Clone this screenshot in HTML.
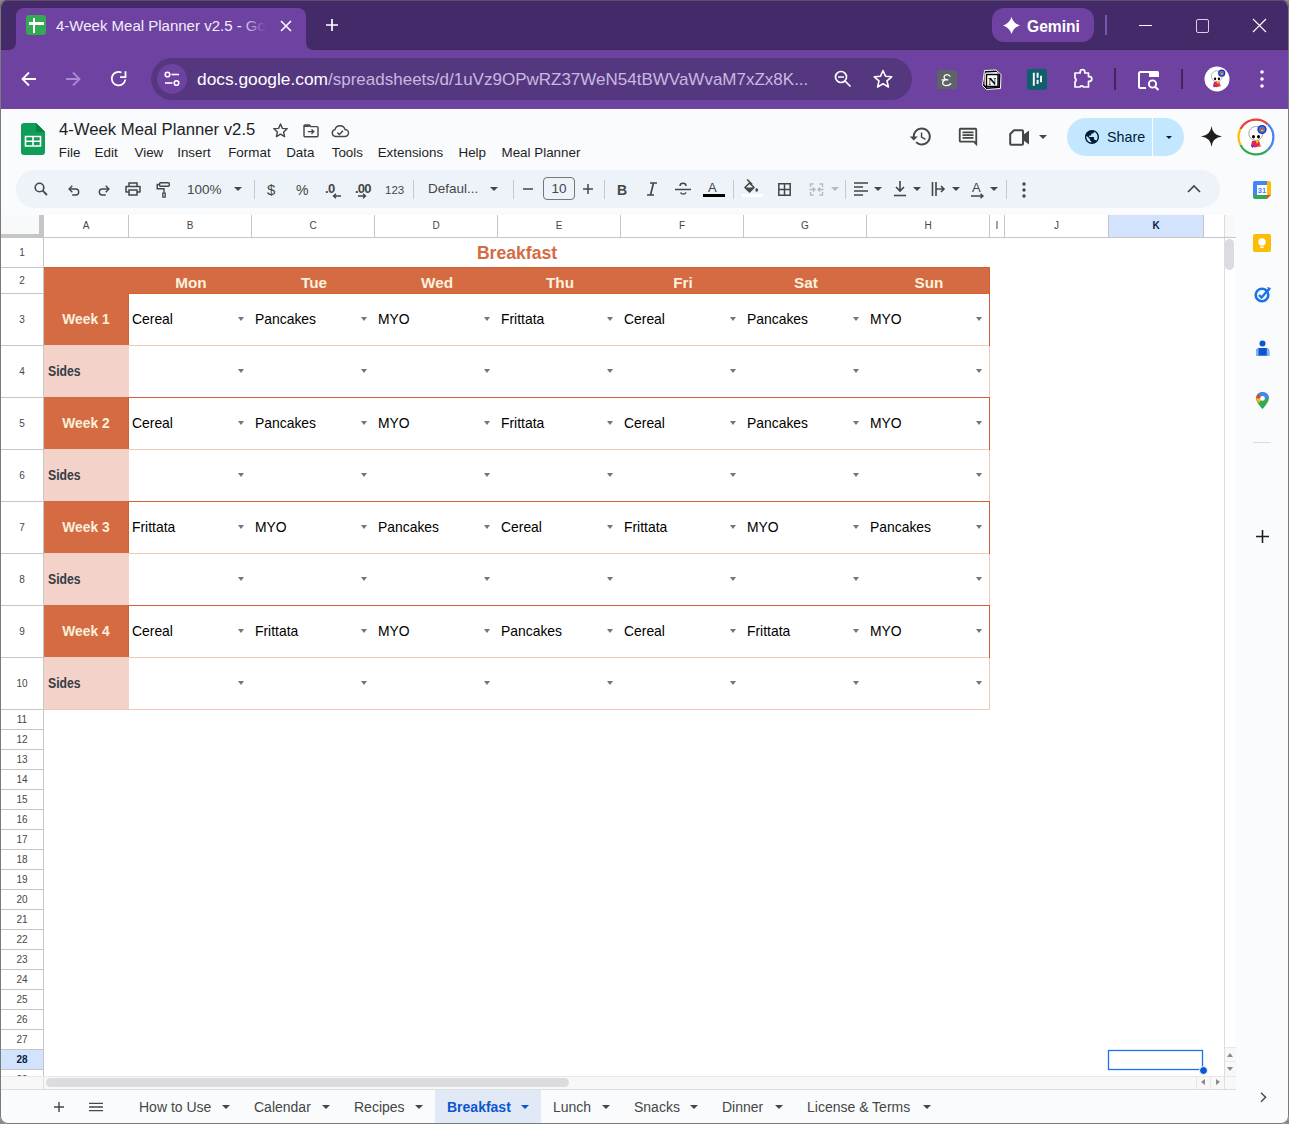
<!DOCTYPE html><html><head><meta charset="utf-8"><style>
*{margin:0;padding:0;box-sizing:border-box}
html,body{width:1289px;height:1124px;overflow:hidden;background:#f9fbfd;font-family:"Liberation Sans",sans-serif;position:relative}
.a{position:absolute}
svg{position:absolute;overflow:visible}
.rh{position:absolute;left:1px;width:42px;text-align:center;font-size:10px;color:#444746}
.ch{position:absolute;top:215px;height:22px;text-align:center;font-size:10px;color:#444746;line-height:22px}
.cell{position:absolute;font-size:13px;color:#000;white-space:nowrap;line-height:15px}
.dd{position:absolute;width:0;height:0;border-left:3.5px solid transparent;border-right:3.5px solid transparent;border-top:4px solid #757575}
.mi{position:absolute;top:144px;font-size:13.4px;color:#1f1f1f;line-height:17px;white-space:nowrap}
.st{position:absolute;top:1099px;font-size:14px;color:#444746;line-height:17px;white-space:nowrap}
.sep{position:absolute;top:180px;width:1px;height:19px;background:#c7c7c7}
</style></head><body>
<div class="a" style="left:0;top:0;width:1289px;height:50px;background:#452a6a"></div>
<div class="a" style="left:0;top:49px;width:1289px;height:1px;background:#40265e"></div>
<div class="a" style="left:0;top:50px;width:1289px;height:59px;background:#6e42a1"></div>
<div class="a" style="left:16px;top:8px;width:290px;height:46px;background:#6e42a1;border-radius:8px 8px 0 0"></div>
<svg style="left:0;top:0" width="1289" height="60"><path d="M8 50 Q16 50 16 42 L16 50 Z" fill="#6e42a1"/><path d="M306 42 Q306 50 314 50 L306 50 Z" fill="#6e42a1"/></svg>
<div class="a" style="left:26px;top:15px;width:20px;height:20px;background:#34a853;border-radius:3px"></div>
<div class="a" style="left:32.5px;top:17.5px;width:2.6px;height:15px;background:#fff"></div>
<div class="a" style="left:28.5px;top:22px;width:15px;height:2.6px;background:#fff"></div>
<div class="a w" style="left:56px;top:17px;font-size:15px;color:#f3eefa;white-space:nowrap;line-height:18px;width:212px;overflow:hidden">4-Week Meal Planner v2.5 - Google Sheets</div>
<div class="a" style="left:240px;top:10px;width:30px;height:30px;background:linear-gradient(90deg,rgba(110,66,161,0),#6e42a1 85%)"></div>
<svg style="left:280px;top:20px" width="12" height="12"><path d="M1 1L11 11M11 1L1 11" stroke="#fff" stroke-width="1.6"/></svg>
<svg style="left:326px;top:19px" width="12" height="12"><path d="M6 0V12M0 6H12" stroke="#fff" stroke-width="1.7"/></svg>
<div class="a" style="left:992px;top:8px;width:102px;height:34px;background:#6e42a1;border-radius:12px"></div>
<svg style="left:1003px;top:17px" width="17" height="17"><path d="M8.5 0 Q10.5 6.5 17 8.5 Q10.5 10.5 8.5 17 Q6.5 10.5 0 8.5 Q6.5 6.5 8.5 0Z" fill="#fff"/></svg>
<div class="a" style="left:1027px;top:16.5px;font-size:15.6px;font-weight:bold;color:#fff;line-height:19px">Gemini</div>
<div class="a" style="left:1105px;top:15px;width:2px;height:20px;background:#7b55ad"></div>
<svg style="left:1139px;top:25px" width="13" height="2"><path d="M0 0.5H13" stroke="#fff" stroke-width="1"/></svg>
<div class="a" style="left:1195.5px;top:19px;width:13.5px;height:13.5px;border:1.2px solid #d9d0e6;border-radius:2px"></div>
<svg style="left:1253px;top:19px" width="13" height="13"><path d="M0 0L13 13M13 0L0 13" stroke="#fff" stroke-width="1.1"/></svg>
<svg style="left:21px;top:70.5px" width="16" height="16"><path d="M15 8H2M8 1.5L1.5 8L8 14.5" stroke="#fff" stroke-width="1.8" fill="none"/></svg>
<svg style="left:65px;top:70.5px" width="16" height="16"><path d="M1 8H14M8 1.5L14.5 8L8 14.5" stroke="#a98bd0" stroke-width="1.8" fill="none"/></svg>
<svg style="left:109.5px;top:70px" width="17" height="17"><path d="M15.3 9.5A6.8 6.8 0 1 1 11.5 2.5" stroke="#fff" stroke-width="1.8" fill="none"/><path d="M10 7.1H15.5V1.2" stroke="#fff" stroke-width="1.8" fill="none"/></svg>
<div class="a" style="left:151px;top:58px;width:761px;height:42px;background:#55377f;border-radius:21px"></div>
<div class="a" style="left:157px;top:64px;width:30px;height:30px;background:#6e42a1;border-radius:15px"></div>
<svg style="left:164px;top:71px" width="16" height="16"><circle cx="3.5" cy="3.5" r="2.3" stroke="#fff" stroke-width="1.6" fill="none"/><path d="M7.5 3.5H15" stroke="#fff" stroke-width="1.6"/><circle cx="12.5" cy="12" r="2.3" stroke="#fff" stroke-width="1.6" fill="none"/><path d="M1 12H8.5" stroke="#fff" stroke-width="1.6"/></svg>
<div class="a" style="left:197px;top:69px;font-size:17.33px;color:#fff;line-height:20px;white-space:nowrap">docs.google.com<span style="color:#c9b8e0;font-size:17px">/spreadsheets/d/1uVz9OPwRZ37WeN54tBWVaWvaM7xZx8K...</span></div>
<svg style="left:834px;top:70px" width="18" height="18"><circle cx="7" cy="7" r="5.5" stroke="#fff" stroke-width="1.7" fill="none"/><path d="M11 11L16.5 16.5M4 7H10" stroke="#fff" stroke-width="1.7"/></svg>
<svg style="left:873px;top:69px" width="20" height="20"><path d="M10 1.5L12.5 7.3L18.7 7.8L14 11.9L15.4 18L10 14.8L4.6 18L6 11.9L1.3 7.8L7.5 7.3Z" stroke="#fff" stroke-width="1.6" fill="none" stroke-linejoin="round"/></svg>
<div class="a" style="left:937px;top:69.5px;width:19.5px;height:19.5px;background:#5f6368;border-radius:2px"></div>
<svg style="left:937px;top:69.5px" width="20" height="20"><path d="M13 6.2Q11.5 4.3 9.2 4.8Q6.6 5.4 7.2 7.8Q7.6 9.4 10 9.6Q6 9.8 5.7 12.6Q5.5 15.3 9 15.6Q12 15.8 13.8 13.8M5 9.8H11" stroke="#fff" stroke-width="1.3" fill="none" stroke-linecap="round"/></svg>
<svg style="left:981px;top:68.5px" width="22" height="22"><path d="M3.5 1.5L15 1L20 5.5L19.5 19.5L5.5 20.5L1.5 16.5Z" fill="#000" stroke="#fff" stroke-width="1"/><path d="M5 3.5L16 3L17.5 4.5L17.5 17.8L6 18.5L3.5 15.5L3.5 5Z" fill="#fff"/><path d="M5.5 5.5H17V17.5H5.5Z" fill="#fff" stroke="#000" stroke-width="1.4"/><text x="11.3" y="15.6" font-size="11" font-weight="bold" font-family="Liberation Serif" text-anchor="middle" fill="#000">N</text></svg>
<div class="a" style="left:1026.5px;top:69px;width:20px;height:20.5px;background:#0f5f6d;border-radius:2.5px"></div>
<svg style="left:1026.5px;top:69px" width="20" height="21"><path d="M6.8 3.8V16.8M10.6 3.8V8.8M10.6 10.8V15M14 6.8V13.2" stroke="#fff" stroke-width="1.9"/></svg>
<svg style="left:1072px;top:68px" width="22" height="22"><path d="M3 5H8.2V4A2.3 2.3 0 0 1 12.8 4V5H16.5V8.7H17.5A2.3 2.3 0 0 1 17.5 13.3H16.5V19H11.5A2 2 0 0 0 8 19H3V13.8A2 2 0 0 0 3 10.2Z" stroke="#fff" stroke-width="1.7" fill="none" stroke-linejoin="round"/></svg>
<div class="a" style="left:1114px;top:68px;width:2px;height:22px;background:#3f265f"></div>
<svg style="left:1137px;top:70px" width="24" height="22"><path d="M9 18H3.5A1.5 1.5 0 0 1 2 16.5V3.5A1.5 1.5 0 0 1 3.5 2H12" stroke="#fff" stroke-width="2" fill="none"/><path d="M12 1H20.5A1.5 1.5 0 0 1 22 2.5V7H12Z" fill="#fff"/><circle cx="15.5" cy="14" r="3.6" stroke="#fff" stroke-width="1.9" fill="none"/><path d="M18 16.7L21.5 20" stroke="#fff" stroke-width="2"/></svg>
<div class="a" style="left:1181px;top:69px;width:2px;height:20px;background:#3f265f"></div>
<svg style="left:1194.5px;top:56.5px" width="44" height="44"><circle cx="22" cy="22" r="12.5" fill="#fff"/><g transform="translate(22 22) scale(0.78) translate(-22 -22)"><circle cx="21.8" cy="18.5" r="7" fill="#fff" stroke="#9a9a9a" stroke-width="0.9"/><ellipse cx="19.5" cy="21.8" rx="1.5" ry="1.7" fill="#000"/><ellipse cx="24.5" cy="21.8" rx="1.5" ry="1.7" fill="#000"/><path d="M18 26L25 25.5L26.5 31L21 32.5L17 31Z" fill="#e0245e"/><path d="M21 24.5L25 26L23 29Z" fill="#f7c600"/><path d="M17 29.5L20 31.5L18 33Z" fill="#1b3fd1"/><path d="M25 29L27.5 31L25 32Z" fill="#f26b1d"/><circle cx="28" cy="14.5" r="4.6" fill="#3a1fbf"/><circle cx="28" cy="14.5" r="3.2" fill="#1f8fd8"/><circle cx="28" cy="14.8" r="1.7" fill="#e8402a"/><rect x="27" y="14.8" width="2.4" height="1.2" fill="#f2d21b"/></g></svg>
<svg style="left:1259px;top:70px" width="6" height="18"><circle cx="3" cy="2" r="1.8" fill="#fff"/><circle cx="3" cy="9" r="1.8" fill="#fff"/><circle cx="3" cy="16" r="1.8" fill="#fff"/></svg>
<svg style="left:21px;top:123px" width="24" height="32"><path d="M3 0H15L24 9V29A3 3 0 0 1 21 32H3A3 3 0 0 1 0 29V3A3 3 0 0 1 3 0Z" fill="#0f9d58"/><path d="M15 0L24 9H18A3 3 0 0 1 15 6Z" fill="#087f3b"/><path d="M15 0V6A3 3 0 0 0 18 9H24Z" fill="#0b8043"/><path d="M4.5 13.5H19.5V23H4.5Z" fill="none" stroke="#fff" stroke-width="1.6"/><path d="M4.5 18.2H19.5M12 13.5V23" stroke="#fff" stroke-width="1.6"/></svg>
<div class="a" style="left:58.5px;top:121.2px;font-size:15.6px;color:#1f1f1f;line-height:18px;white-space:nowrap;transform:scaleX(1.07);transform-origin:0 0">4-Week Meal Planner v2.5</div>
<svg style="left:273px;top:123.3px" width="15" height="15"><path d="M7.5 1L9.4 5.4L14.2 5.8L10.6 9L11.6 13.7L7.5 11.2L3.4 13.7L4.4 9L0.8 5.8L5.6 5.4Z" stroke="#444746" stroke-width="1.4" fill="none" stroke-linejoin="round"/></svg>
<svg style="left:302.5px;top:123.7px" width="16" height="14"><path d="M2 1H6.3L7.8 2.6H14A1 1 0 0 1 15 3.6V11.8A1 1 0 0 1 14 12.8H2A1 1 0 0 1 1 11.8V2A1 1 0 0 1 2 1Z" stroke="#444746" stroke-width="1.4" fill="none"/><path d="M1 2.2H6.6" stroke="#444746" stroke-width="1.6"/><path d="M4.8 7.6H10.5M8.5 5.5L10.7 7.6L8.5 9.7" stroke="#444746" stroke-width="1.4" fill="none"/></svg>
<svg style="left:331px;top:124px" width="18" height="14"><path d="M4.5 12.5A3.5 3.5 0 0 1 4 5.6A5.2 5.2 0 0 1 14 5.5A3.5 3.5 0 0 1 14 12.5Z" stroke="#444746" stroke-width="1.4" fill="none"/><path d="M6.3 8.6L8.3 10.5L12 6.8" stroke="#444746" stroke-width="1.4" fill="none"/></svg>
<div class="mi" style="left:58.8px">File</div>
<div class="mi" style="left:94.6px">Edit</div>
<div class="mi" style="left:134.5px">View</div>
<div class="mi" style="left:177.2px">Insert</div>
<div class="mi" style="left:228.2px">Format</div>
<div class="mi" style="left:286.2px">Data</div>
<div class="mi" style="left:331.7px">Tools</div>
<div class="mi" style="left:377.7px">Extensions</div>
<div class="mi" style="left:458.5px">Help</div>
<div class="mi" style="left:501.5px">Meal Planner</div>
<svg style="left:910px;top:124px" width="24" height="24" viewBox="0 0 24 24"><path transform="translate(-1.2 0.5) scale(1)" d="M13 3c-4.97 0-9 4.03-9 9H1l3.89 3.89.07.14L9 12H6c0-3.87 3.13-7 7-7s7 3.13 7 7-3.13 7-7 7c-1.93 0-3.68-.79-4.94-2.06l-1.42 1.42C8.27 19.99 10.51 21 13 21c4.97 0 9-4.03 9-9s-4.03-9-9-9zm-1 5v5l4.28 2.54.72-1.21-3.5-2.08V8H12z" fill="#444746"/></svg>
<svg style="left:957px;top:126px" width="22" height="22" viewBox="0 0 24 24"><path d="M21.99 4c0-1.1-.89-2-1.99-2H4c-1.1 0-2 .9-2 2v12c0 1.1.9 2 2 2h14l4 4-.01-18zM20 4v13.17L18.83 16H4V4h16zM6 12h12v2H6zm0-3h12v2H6zm0-3h12v2H6z" fill="#444746"/></svg>
<svg style="left:1009px;top:129px" width="22" height="17"><path d="M5 1.2H13A1 1 0 0 1 14 2.2V14.8A1 1 0 0 1 13 15.8H2.2A1 1 0 0 1 1.2 14.8V5Z" stroke="#444746" stroke-width="2" fill="none" stroke-linejoin="round"/><path d="M14 6L20 1.5V15.5L14 11Z" fill="#444746"/></svg>
<div class="dd" style="left:1039px;top:135px;border-top-color:#444746;border-left-width:4px;border-right-width:4px"></div>
<div class="a" style="left:1067px;top:118px;width:117px;height:38px;background:#c2e7ff;border-radius:19px"></div>
<div class="a" style="left:1152px;top:118px;width:1px;height:38px;background:#f9fbfd"></div>
<svg style="left:1085px;top:130px" width="14" height="14" viewBox="2 2 20 20"><path d="M12 2C6.48 2 2 6.48 2 12s4.48 10 10 10 10-4.48 10-10S17.52 2 12 2zm-1 17.930c-3.95-.49-7-3.850-7-7.930 0-.62.08-1.21.21-1.790L9 15v1c0 1.1.9 2 2 2v1.930zm6.9-2.540c-.26-.81-1-1.390-1.900-1.390h-1v-3c0-.55-.45-1-1-1H8v-2h2c.55 0 1-.45 1-1V7h2c1.1 0 2-.9 2-2v-.41c2.930 1.190 5 4.060 5 7.410 0 2.080-.8 3.970-2.100 5.390z" fill="#001d35"/></svg>
<div class="a" style="left:1107px;top:127.5px;font-size:14.3px;color:#001d35;line-height:18px">Share</div>
<div class="dd" style="left:1166px;top:136px;border-top-color:#001d35;border-left-width:3px;border-right-width:3px;border-top-width:3.5px"></div>
<svg style="left:1201px;top:126px" width="21" height="21"><path d="M10.5 0Q11.5 9.5 21 10.5Q11.5 11.5 10.5 21Q9.5 11.5 0 10.5Q9.5 9.5 10.5 0Z" fill="#1f1f1f"/></svg>
<svg style="left:1233.6px;top:114.69999999999999px" width="44" height="44"><path d="M6.50 14.10A17.4 17.4 0 0 1 33.64 9.07" stroke="#ea4335" stroke-width="2.2" fill="none"/><path d="M33.64 9.07A17.4 17.4 0 0 1 33.76 34.83" stroke="#4285f4" stroke-width="2.2" fill="none"/><path d="M33.76 34.83A17.4 17.4 0 0 1 6.52 29.95" stroke="#34a853" stroke-width="2.2" fill="none"/><path d="M6.52 29.95A17.4 17.4 0 0 1 6.50 14.10" stroke="#fbbc04" stroke-width="2.2" fill="none"/><circle cx="22" cy="22" r="16" fill="#fff"/><g transform="translate(22 22) scale(1.0) translate(-22 -22)"><circle cx="21.8" cy="18.5" r="7" fill="#fff" stroke="#9a9a9a" stroke-width="0.9"/><ellipse cx="19.5" cy="21.8" rx="1.5" ry="1.7" fill="#000"/><ellipse cx="24.5" cy="21.8" rx="1.5" ry="1.7" fill="#000"/><path d="M18 26L25 25.5L26.5 31L21 32.5L17 31Z" fill="#e0245e"/><path d="M21 24.5L25 26L23 29Z" fill="#f7c600"/><path d="M17 29.5L20 31.5L18 33Z" fill="#1b3fd1"/><path d="M25 29L27.5 31L25 32Z" fill="#f26b1d"/><circle cx="28" cy="14.5" r="4.6" fill="#3a1fbf"/><circle cx="28" cy="14.5" r="3.2" fill="#1f8fd8"/><circle cx="28" cy="14.8" r="1.7" fill="#e8402a"/><rect x="27" y="14.8" width="2.4" height="1.2" fill="#f2d21b"/></g></svg>
<div class="a" style="left:16px;top:170px;width:1204px;height:38px;background:#eef2f9;border-radius:19px"></div>
<svg style="left:34px;top:182px" width="14" height="14"><circle cx="5.5" cy="5.5" r="4.3" stroke="#444746" stroke-width="1.6" fill="none"/><path d="M8.7 8.7L13 13" stroke="#444746" stroke-width="1.8"/></svg>
<svg style="left:67.5px;top:185px" width="13" height="11"><path d="M4.3 0.8L1.1 4L4.3 7.2" stroke="#444746" stroke-width="1.4" fill="none"/><path d="M1.4 4H7.7A3 3 0 0 1 7.7 10H4.2" stroke="#444746" stroke-width="1.4" fill="none"/></svg>
<svg style="left:97px;top:185px" width="13" height="11"><path d="M8.7 0.8L11.9 4L8.7 7.2" stroke="#444746" stroke-width="1.4" fill="none"/><path d="M11.6 4H5.3A3 3 0 0 0 5.3 10H8.8" stroke="#444746" stroke-width="1.4" fill="none"/></svg>
<svg style="left:125px;top:182px" width="16" height="14"><path d="M4 4V1H12V4" stroke="#444746" stroke-width="1.5" fill="none"/><path d="M4 10H1V4.5H15V10H12" stroke="#444746" stroke-width="1.5" fill="none" stroke-linejoin="round"/><path d="M4 8H12V13H4Z" stroke="#444746" stroke-width="1.5" fill="none"/></svg>
<svg style="left:156px;top:182px" width="14" height="16"><path d="M4.6 0.8H12.3A1 1 0 0 1 13.3 1.8V3.3A1 1 0 0 1 12.3 4.3H4.6A1 1 0 0 1 3.6 3.3V1.8A1 1 0 0 1 4.6 0.8Z" stroke="#444746" stroke-width="1.4" fill="none"/><path d="M3.6 2.5H1.2V6.8H8V10.8" stroke="#444746" stroke-width="1.4" fill="none"/><path d="M6.8 11.2H9.2V15.2H6.8Z" stroke="#444746" stroke-width="1.3" fill="none"/></svg>
<div class="a" style="left:187px;top:182px;font-size:13.5px;color:#444746;line-height:16px">100%</div>
<div class="dd" style="left:234px;top:187px;border-top-color:#444746;border-left-width:4.5px;border-right-width:4.5px;border-top-width:4.5px"></div>
<div class="sep" style="left:254px"></div>
<div class="sep" style="left:413px"></div>
<div class="sep" style="left:513px"></div>
<div class="sep" style="left:604px"></div>
<div class="sep" style="left:733px"></div>
<div class="sep" style="left:845px"></div>
<div class="sep" style="left:1006px"></div>
<div class="a" style="left:267px;top:181px;font-size:15px;color:#444746;line-height:17px">$</div>
<div class="a" style="left:296px;top:182px;font-size:14px;color:#444746;line-height:16px">%</div>
<div class="a" style="left:325px;top:181px;font-size:13px;font-weight:bold;color:#444746;line-height:15px;letter-spacing:-0.5px">.0</div>
<svg style="left:332px;top:193px" width="10" height="6"><path d="M9 3H2M4 0.8L1.5 3L4 5.2" stroke="#444746" stroke-width="1.4" fill="none"/></svg>
<div class="a" style="left:355px;top:181px;font-size:13px;font-weight:bold;color:#444746;line-height:15px;letter-spacing:-0.8px">.00</div>
<svg style="left:357px;top:193px" width="10" height="6"><path d="M1 3H8M6 0.8L8.5 3L6 5.2" stroke="#444746" stroke-width="1.4" fill="none"/></svg>
<div class="a" style="left:385px;top:183px;font-size:11.5px;color:#444746;line-height:14px">123</div>
<div class="a" style="left:428px;top:181px;font-size:13.5px;color:#444746;line-height:16px">Defaul...</div>
<div class="dd" style="left:490px;top:187px;border-top-color:#444746;border-left-width:4.5px;border-right-width:4.5px;border-top-width:4.5px"></div>
<svg style="left:523px;top:188px" width="10" height="2"><path d="M0 1H10" stroke="#444746" stroke-width="1.5"/></svg>
<div class="a" style="left:543px;top:177px;width:32px;height:23px;border:1px solid #747775;border-radius:4px;font-size:13.5px;color:#444746;text-align:center;line-height:21px">10</div>
<svg style="left:583px;top:184px" width="10" height="10"><path d="M5 0V10M0 5H10" stroke="#444746" stroke-width="1.5"/></svg>
<div class="a" style="left:617px;top:182px;font-size:14px;font-weight:bold;color:#444746;line-height:16px">B</div>
<svg style="left:646px;top:182px" width="12" height="14"><path d="M4 1H11M1 13H8M7.5 1L4.5 13" stroke="#444746" stroke-width="1.7" fill="none"/></svg>
<svg style="left:675px;top:182px" width="17" height="14"><path d="M0 7.5H16" stroke="#444746" stroke-width="1.5"/><path d="M11 4A3 2.7 0 0 0 5 4M5.5 10.5A3 2.7 0 0 0 11 10.5" stroke="#444746" stroke-width="1.5" fill="none"/></svg>
<div class="a" style="left:708px;top:180px;font-size:13px;color:#444746;line-height:15px">A</div>
<div class="a" style="left:703px;top:194px;width:22px;height:3px;background:#000"></div>
<svg style="left:743px;top:178px" width="17" height="16"><path d="M4.2 1.5L9.2 6.5" stroke="#444746" stroke-width="1.6"/><path d="M2 9.5L6.5 5L11 9.5L6.5 14Z" stroke="#444746" stroke-width="1.6" fill="none" stroke-linejoin="round"/><path d="M2 9.5H11L6.5 14Z" fill="#444746"/><ellipse cx="13.7" cy="12" rx="1.4" ry="1.7" fill="#444746"/></svg>
<div class="a" style="left:742px;top:194px;width:21px;height:3px;background:#fff"></div>
<svg style="left:777.5px;top:183.2px" width="13" height="13"><path d="M0.8 0.8H12.2V12.2H0.8ZM6.5 0.8V12.2M0.8 6.5H12.2" stroke="#444746" stroke-width="1.5" fill="none"/></svg>
<svg style="left:808.5px;top:183px" width="15" height="13"><path d="M4.5 1H1.5V4M1.5 9V12H4.5M10.5 1H13.5V4M13.5 9V12H10.5" stroke="#b8b9bb" stroke-width="1.4" fill="none"/><path d="M0.5 6.5H6M4 4.5L6 6.5L4 8.5M14.5 6.5H9M11 4.5L9 6.5L11 8.5" stroke="#b8b9bb" stroke-width="1.3" fill="none"/></svg>
<div class="dd" style="left:831px;top:187px;border-top-color:#b8b9bb;border-left-width:4px;border-right-width:4px"></div>
<svg style="left:854px;top:182px" width="14" height="14"><path d="M0 1H14M0 5H9M0 9H14M0 13H9" stroke="#444746" stroke-width="1.5"/></svg>
<div class="dd" style="left:874px;top:187px;border-top-color:#444746;border-left-width:4px;border-right-width:4px"></div>
<svg style="left:893px;top:181px" width="14" height="16"><path d="M7 0V10M3 6L7 10L11 6" stroke="#444746" stroke-width="1.6" fill="none"/><path d="M1 14.5H13" stroke="#444746" stroke-width="1.6"/></svg>
<div class="dd" style="left:913px;top:187px;border-top-color:#444746;border-left-width:4px;border-right-width:4px"></div>
<svg style="left:931px;top:182px" width="15" height="14"><path d="M1.5 0V14M5 0V14" stroke="#444746" stroke-width="1.6"/><path d="M5 7H13M10 4L13 7L10 10" stroke="#444746" stroke-width="1.6" fill="none"/></svg>
<div class="dd" style="left:952px;top:187px;border-top-color:#444746;border-left-width:4px;border-right-width:4px"></div>
<div class="a" style="left:972px;top:180px;font-size:13px;color:#444746;line-height:15px">A</div>
<svg style="left:970px;top:193px" width="15" height="6"><path d="M1 3H13M10.5 0.8L13 3L10.5 5.2" stroke="#444746" stroke-width="1.4" fill="none"/></svg>
<div class="dd" style="left:990px;top:187px;border-top-color:#444746;border-left-width:4px;border-right-width:4px"></div>
<svg style="left:1021px;top:182px" width="6" height="16"><circle cx="3" cy="2" r="1.7" fill="#444746"/><circle cx="3" cy="8" r="1.7" fill="#444746"/><circle cx="3" cy="14" r="1.7" fill="#444746"/></svg>
<svg style="left:1187px;top:185px" width="14" height="8"><path d="M1 7L7 1L13 7" stroke="#444746" stroke-width="1.7" fill="none"/></svg>
<div class="a" style="left:1px;top:215px;width:1223px;height:862px;background:#fff;"></div>
<div class="a" style="left:1109px;top:215px;width:94px;height:22px;background:#d3e3fd;"></div>
<div class="ch" style="left:44px;width:84px;color:#444746;font-weight:normal">A</div>
<div class="ch" style="left:129px;width:122px;color:#444746;font-weight:normal">B</div>
<div class="ch" style="left:252px;width:122px;color:#444746;font-weight:normal">C</div>
<div class="ch" style="left:375px;width:122px;color:#444746;font-weight:normal">D</div>
<div class="ch" style="left:498px;width:122px;color:#444746;font-weight:normal">E</div>
<div class="ch" style="left:621px;width:122px;color:#444746;font-weight:normal">F</div>
<div class="ch" style="left:744px;width:122px;color:#444746;font-weight:normal">G</div>
<div class="ch" style="left:867px;width:122px;color:#444746;font-weight:normal">H</div>
<div class="ch" style="left:990px;width:14px;color:#444746;font-weight:normal">I</div>
<div class="ch" style="left:1005px;width:103px;color:#444746;font-weight:normal">J</div>
<div class="ch" style="left:1109px;width:94px;color:#041e49;font-weight:bold">K</div>
<div class="a" style="left:128px;top:215px;width:1px;height:22px;background:#c4c7c5;"></div>
<div class="a" style="left:251px;top:215px;width:1px;height:22px;background:#c4c7c5;"></div>
<div class="a" style="left:374px;top:215px;width:1px;height:22px;background:#c4c7c5;"></div>
<div class="a" style="left:497px;top:215px;width:1px;height:22px;background:#c4c7c5;"></div>
<div class="a" style="left:620px;top:215px;width:1px;height:22px;background:#c4c7c5;"></div>
<div class="a" style="left:743px;top:215px;width:1px;height:22px;background:#c4c7c5;"></div>
<div class="a" style="left:866px;top:215px;width:1px;height:22px;background:#c4c7c5;"></div>
<div class="a" style="left:989px;top:215px;width:1px;height:22px;background:#c4c7c5;"></div>
<div class="a" style="left:1004px;top:215px;width:1px;height:22px;background:#c4c7c5;"></div>
<div class="a" style="left:1108px;top:215px;width:1px;height:22px;background:#c4c7c5;"></div>
<div class="a" style="left:1203px;top:215px;width:1px;height:22px;background:#c4c7c5;"></div>
<div class="a" style="left:1px;top:237px;width:1223px;height:1px;background:#c4c7c5;"></div>
<div class="a" style="left:1px;top:215px;width:38px;height:19px;background:#f8f9fa;"></div>
<div class="a" style="left:39px;top:215px;width:4px;height:22px;background:#c6c6c6;"></div>
<div class="a" style="left:1px;top:234px;width:42px;height:3px;background:#c6c6c6;"></div>
<div class="a" style="left:43px;top:215px;width:1px;height:862px;background:#c4c7c5;"></div>
<div class="rh" style="top:238px;height:29px;line-height:29px;overflow:hidden">1</div>
<div class="a" style="left:1px;top:267px;width:42px;height:1px;background:#c4c7c5;"></div>
<div class="rh" style="top:268px;height:25px;line-height:25px;overflow:hidden">2</div>
<div class="a" style="left:1px;top:293px;width:42px;height:1px;background:#c4c7c5;"></div>
<div class="rh" style="top:294px;height:51px;line-height:51px;overflow:hidden">3</div>
<div class="a" style="left:1px;top:345px;width:42px;height:1px;background:#c4c7c5;"></div>
<div class="rh" style="top:346px;height:51px;line-height:51px;overflow:hidden">4</div>
<div class="a" style="left:1px;top:397px;width:42px;height:1px;background:#c4c7c5;"></div>
<div class="rh" style="top:398px;height:51px;line-height:51px;overflow:hidden">5</div>
<div class="a" style="left:1px;top:449px;width:42px;height:1px;background:#c4c7c5;"></div>
<div class="rh" style="top:450px;height:51px;line-height:51px;overflow:hidden">6</div>
<div class="a" style="left:1px;top:501px;width:42px;height:1px;background:#c4c7c5;"></div>
<div class="rh" style="top:502px;height:51px;line-height:51px;overflow:hidden">7</div>
<div class="a" style="left:1px;top:553px;width:42px;height:1px;background:#c4c7c5;"></div>
<div class="rh" style="top:554px;height:51px;line-height:51px;overflow:hidden">8</div>
<div class="a" style="left:1px;top:605px;width:42px;height:1px;background:#c4c7c5;"></div>
<div class="rh" style="top:606px;height:51px;line-height:51px;overflow:hidden">9</div>
<div class="a" style="left:1px;top:657px;width:42px;height:1px;background:#c4c7c5;"></div>
<div class="rh" style="top:658px;height:51px;line-height:51px;overflow:hidden">10</div>
<div class="a" style="left:1px;top:709px;width:42px;height:1px;background:#c4c7c5;"></div>
<div class="rh" style="top:710px;height:19px;line-height:19px;overflow:hidden">11</div>
<div class="a" style="left:1px;top:729px;width:42px;height:1px;background:#c4c7c5;"></div>
<div class="rh" style="top:730px;height:19px;line-height:19px;overflow:hidden">12</div>
<div class="a" style="left:1px;top:749px;width:42px;height:1px;background:#c4c7c5;"></div>
<div class="rh" style="top:750px;height:19px;line-height:19px;overflow:hidden">13</div>
<div class="a" style="left:1px;top:769px;width:42px;height:1px;background:#c4c7c5;"></div>
<div class="rh" style="top:770px;height:19px;line-height:19px;overflow:hidden">14</div>
<div class="a" style="left:1px;top:789px;width:42px;height:1px;background:#c4c7c5;"></div>
<div class="rh" style="top:790px;height:19px;line-height:19px;overflow:hidden">15</div>
<div class="a" style="left:1px;top:809px;width:42px;height:1px;background:#c4c7c5;"></div>
<div class="rh" style="top:810px;height:19px;line-height:19px;overflow:hidden">16</div>
<div class="a" style="left:1px;top:829px;width:42px;height:1px;background:#c4c7c5;"></div>
<div class="rh" style="top:830px;height:19px;line-height:19px;overflow:hidden">17</div>
<div class="a" style="left:1px;top:849px;width:42px;height:1px;background:#c4c7c5;"></div>
<div class="rh" style="top:850px;height:19px;line-height:19px;overflow:hidden">18</div>
<div class="a" style="left:1px;top:869px;width:42px;height:1px;background:#c4c7c5;"></div>
<div class="rh" style="top:870px;height:19px;line-height:19px;overflow:hidden">19</div>
<div class="a" style="left:1px;top:889px;width:42px;height:1px;background:#c4c7c5;"></div>
<div class="rh" style="top:890px;height:19px;line-height:19px;overflow:hidden">20</div>
<div class="a" style="left:1px;top:909px;width:42px;height:1px;background:#c4c7c5;"></div>
<div class="rh" style="top:910px;height:19px;line-height:19px;overflow:hidden">21</div>
<div class="a" style="left:1px;top:929px;width:42px;height:1px;background:#c4c7c5;"></div>
<div class="rh" style="top:930px;height:19px;line-height:19px;overflow:hidden">22</div>
<div class="a" style="left:1px;top:949px;width:42px;height:1px;background:#c4c7c5;"></div>
<div class="rh" style="top:950px;height:19px;line-height:19px;overflow:hidden">23</div>
<div class="a" style="left:1px;top:969px;width:42px;height:1px;background:#c4c7c5;"></div>
<div class="rh" style="top:970px;height:19px;line-height:19px;overflow:hidden">24</div>
<div class="a" style="left:1px;top:989px;width:42px;height:1px;background:#c4c7c5;"></div>
<div class="rh" style="top:990px;height:19px;line-height:19px;overflow:hidden">25</div>
<div class="a" style="left:1px;top:1009px;width:42px;height:1px;background:#c4c7c5;"></div>
<div class="rh" style="top:1010px;height:19px;line-height:19px;overflow:hidden">26</div>
<div class="a" style="left:1px;top:1029px;width:42px;height:1px;background:#c4c7c5;"></div>
<div class="rh" style="top:1030px;height:19px;line-height:19px;overflow:hidden">27</div>
<div class="a" style="left:1px;top:1049px;width:42px;height:1px;background:#c4c7c5;"></div>
<div class="a" style="left:1px;top:1050px;width:42px;height:20px;background:#d3e3fd;"></div>
<div class="rh" style="top:1050px;height:19px;line-height:19px;color:#041e49;font-weight:bold">28</div>
<div class="a" style="left:1px;top:1069px;width:42px;height:1px;background:#c4c7c5;"></div>
<div class="rh" style="top:1070px;height:7px;line-height:19px;overflow:hidden">29</div>
<div class="a" style="left:44px;top:267px;width:946px;height:27px;background:#d46b43;"></div>
<div class="a" style="left:44px;top:267px;width:946px;height:1px;background:#d35f35;"></div>
<div class="a" style="left:44px;top:293px;width:946px;height:1px;background:#d35f35;"></div>
<div class="a" style="left:989px;top:267px;width:1px;height:27px;background:#d35f35;"></div>
<div class="a" style="left:44px;top:243.28px;width:946px;text-align:center;font-size:17.6px;line-height:20.24px;color:#d46b43;font-weight:bold;white-space:nowrap;">Breakfast</div>
<div class="a" style="left:130px;top:274.40px;width:122px;text-align:center;font-size:15.3px;line-height:17.59px;color:#fdf1dc;font-weight:bold;white-space:nowrap;">Mon</div>
<div class="a" style="left:253px;top:274.40px;width:122px;text-align:center;font-size:15.3px;line-height:17.59px;color:#fdf1dc;font-weight:bold;white-space:nowrap;">Tue</div>
<div class="a" style="left:376px;top:274.40px;width:122px;text-align:center;font-size:15.3px;line-height:17.59px;color:#fdf1dc;font-weight:bold;white-space:nowrap;">Wed</div>
<div class="a" style="left:499px;top:274.40px;width:122px;text-align:center;font-size:15.3px;line-height:17.59px;color:#fdf1dc;font-weight:bold;white-space:nowrap;">Thu</div>
<div class="a" style="left:622px;top:274.40px;width:122px;text-align:center;font-size:15.3px;line-height:17.59px;color:#fdf1dc;font-weight:bold;white-space:nowrap;">Fri</div>
<div class="a" style="left:745px;top:274.40px;width:122px;text-align:center;font-size:15.3px;line-height:17.59px;color:#fdf1dc;font-weight:bold;white-space:nowrap;">Sat</div>
<div class="a" style="left:868px;top:274.40px;width:122px;text-align:center;font-size:15.3px;line-height:17.59px;color:#fdf1dc;font-weight:bold;white-space:nowrap;">Sun</div>
<div class="a" style="left:44px;top:293px;width:85px;height:52px;background:#d46b43;"></div>
<div class="a" style="left:128px;top:293px;width:1px;height:52px;background:#d35f35;"></div>
<div class="a" style="left:44px;top:312.28px;width:84px;text-align:center;font-size:13.8px;line-height:15.87px;color:#fdf1dc;font-weight:bold;white-space:nowrap;">Week 1</div>
<div class="a" style="left:44px;top:345px;width:85px;height:52px;background:#f3d3c9;"></div>
<div class="a" style="left:47.5px;top:363.19px;font-size:13.9px;line-height:15.98px;color:#353b45;font-weight:bold;white-space:nowrap;transform:scaleX(0.88);transform-origin:0 0">Sides</div>
<div class="a" style="left:129px;top:345px;width:861px;height:1px;background:#f3c8ba;"></div>
<div class="a" style="left:989px;top:294px;width:1px;height:52px;background:#d35f35;"></div>
<div class="a" style="left:989px;top:346px;width:1px;height:52px;background:#f3c8ba;"></div>
<div class="a" style="left:132px;top:311.19px;font-size:13.9px;line-height:15.98px;color:#000;font-weight:normal;white-space:nowrap;">Cereal</div>
<div class="dd" style="left:238px;top:317px"></div>
<div class="dd" style="left:238px;top:369px"></div>
<div class="a" style="left:255px;top:311.19px;font-size:13.9px;line-height:15.98px;color:#000;font-weight:normal;white-space:nowrap;">Pancakes</div>
<div class="dd" style="left:361px;top:317px"></div>
<div class="dd" style="left:361px;top:369px"></div>
<div class="a" style="left:378px;top:311.19px;font-size:13.9px;line-height:15.98px;color:#000;font-weight:normal;white-space:nowrap;">MYO</div>
<div class="dd" style="left:484px;top:317px"></div>
<div class="dd" style="left:484px;top:369px"></div>
<div class="a" style="left:501px;top:311.19px;font-size:13.9px;line-height:15.98px;color:#000;font-weight:normal;white-space:nowrap;">Frittata</div>
<div class="dd" style="left:607px;top:317px"></div>
<div class="dd" style="left:607px;top:369px"></div>
<div class="a" style="left:624px;top:311.19px;font-size:13.9px;line-height:15.98px;color:#000;font-weight:normal;white-space:nowrap;">Cereal</div>
<div class="dd" style="left:730px;top:317px"></div>
<div class="dd" style="left:730px;top:369px"></div>
<div class="a" style="left:747px;top:311.19px;font-size:13.9px;line-height:15.98px;color:#000;font-weight:normal;white-space:nowrap;">Pancakes</div>
<div class="dd" style="left:853px;top:317px"></div>
<div class="dd" style="left:853px;top:369px"></div>
<div class="a" style="left:870px;top:311.19px;font-size:13.9px;line-height:15.98px;color:#000;font-weight:normal;white-space:nowrap;">MYO</div>
<div class="dd" style="left:976px;top:317px"></div>
<div class="dd" style="left:976px;top:369px"></div>
<div class="a" style="left:44px;top:397px;width:85px;height:52px;background:#d46b43;"></div>
<div class="a" style="left:128px;top:397px;width:1px;height:52px;background:#d35f35;"></div>
<div class="a" style="left:44px;top:416.28px;width:84px;text-align:center;font-size:13.8px;line-height:15.87px;color:#fdf1dc;font-weight:bold;white-space:nowrap;">Week 2</div>
<div class="a" style="left:44px;top:449px;width:85px;height:52px;background:#f3d3c9;"></div>
<div class="a" style="left:47.5px;top:467.19px;font-size:13.9px;line-height:15.98px;color:#353b45;font-weight:bold;white-space:nowrap;transform:scaleX(0.88);transform-origin:0 0">Sides</div>
<div class="a" style="left:129px;top:397px;width:861px;height:1px;background:#d35f35;"></div>
<div class="a" style="left:129px;top:449px;width:861px;height:1px;background:#f3c8ba;"></div>
<div class="a" style="left:989px;top:398px;width:1px;height:52px;background:#d35f35;"></div>
<div class="a" style="left:989px;top:450px;width:1px;height:52px;background:#f3c8ba;"></div>
<div class="a" style="left:132px;top:415.19px;font-size:13.9px;line-height:15.98px;color:#000;font-weight:normal;white-space:nowrap;">Cereal</div>
<div class="dd" style="left:238px;top:421px"></div>
<div class="dd" style="left:238px;top:473px"></div>
<div class="a" style="left:255px;top:415.19px;font-size:13.9px;line-height:15.98px;color:#000;font-weight:normal;white-space:nowrap;">Pancakes</div>
<div class="dd" style="left:361px;top:421px"></div>
<div class="dd" style="left:361px;top:473px"></div>
<div class="a" style="left:378px;top:415.19px;font-size:13.9px;line-height:15.98px;color:#000;font-weight:normal;white-space:nowrap;">MYO</div>
<div class="dd" style="left:484px;top:421px"></div>
<div class="dd" style="left:484px;top:473px"></div>
<div class="a" style="left:501px;top:415.19px;font-size:13.9px;line-height:15.98px;color:#000;font-weight:normal;white-space:nowrap;">Frittata</div>
<div class="dd" style="left:607px;top:421px"></div>
<div class="dd" style="left:607px;top:473px"></div>
<div class="a" style="left:624px;top:415.19px;font-size:13.9px;line-height:15.98px;color:#000;font-weight:normal;white-space:nowrap;">Cereal</div>
<div class="dd" style="left:730px;top:421px"></div>
<div class="dd" style="left:730px;top:473px"></div>
<div class="a" style="left:747px;top:415.19px;font-size:13.9px;line-height:15.98px;color:#000;font-weight:normal;white-space:nowrap;">Pancakes</div>
<div class="dd" style="left:853px;top:421px"></div>
<div class="dd" style="left:853px;top:473px"></div>
<div class="a" style="left:870px;top:415.19px;font-size:13.9px;line-height:15.98px;color:#000;font-weight:normal;white-space:nowrap;">MYO</div>
<div class="dd" style="left:976px;top:421px"></div>
<div class="dd" style="left:976px;top:473px"></div>
<div class="a" style="left:44px;top:501px;width:85px;height:52px;background:#d46b43;"></div>
<div class="a" style="left:128px;top:501px;width:1px;height:52px;background:#d35f35;"></div>
<div class="a" style="left:44px;top:520.28px;width:84px;text-align:center;font-size:13.8px;line-height:15.87px;color:#fdf1dc;font-weight:bold;white-space:nowrap;">Week 3</div>
<div class="a" style="left:44px;top:553px;width:85px;height:52px;background:#f3d3c9;"></div>
<div class="a" style="left:47.5px;top:571.19px;font-size:13.9px;line-height:15.98px;color:#353b45;font-weight:bold;white-space:nowrap;transform:scaleX(0.88);transform-origin:0 0">Sides</div>
<div class="a" style="left:129px;top:501px;width:861px;height:1px;background:#d35f35;"></div>
<div class="a" style="left:129px;top:553px;width:861px;height:1px;background:#f3c8ba;"></div>
<div class="a" style="left:989px;top:502px;width:1px;height:52px;background:#d35f35;"></div>
<div class="a" style="left:989px;top:554px;width:1px;height:52px;background:#f3c8ba;"></div>
<div class="a" style="left:132px;top:519.19px;font-size:13.9px;line-height:15.98px;color:#000;font-weight:normal;white-space:nowrap;">Frittata</div>
<div class="dd" style="left:238px;top:525px"></div>
<div class="dd" style="left:238px;top:577px"></div>
<div class="a" style="left:255px;top:519.19px;font-size:13.9px;line-height:15.98px;color:#000;font-weight:normal;white-space:nowrap;">MYO</div>
<div class="dd" style="left:361px;top:525px"></div>
<div class="dd" style="left:361px;top:577px"></div>
<div class="a" style="left:378px;top:519.19px;font-size:13.9px;line-height:15.98px;color:#000;font-weight:normal;white-space:nowrap;">Pancakes</div>
<div class="dd" style="left:484px;top:525px"></div>
<div class="dd" style="left:484px;top:577px"></div>
<div class="a" style="left:501px;top:519.19px;font-size:13.9px;line-height:15.98px;color:#000;font-weight:normal;white-space:nowrap;">Cereal</div>
<div class="dd" style="left:607px;top:525px"></div>
<div class="dd" style="left:607px;top:577px"></div>
<div class="a" style="left:624px;top:519.19px;font-size:13.9px;line-height:15.98px;color:#000;font-weight:normal;white-space:nowrap;">Frittata</div>
<div class="dd" style="left:730px;top:525px"></div>
<div class="dd" style="left:730px;top:577px"></div>
<div class="a" style="left:747px;top:519.19px;font-size:13.9px;line-height:15.98px;color:#000;font-weight:normal;white-space:nowrap;">MYO</div>
<div class="dd" style="left:853px;top:525px"></div>
<div class="dd" style="left:853px;top:577px"></div>
<div class="a" style="left:870px;top:519.19px;font-size:13.9px;line-height:15.98px;color:#000;font-weight:normal;white-space:nowrap;">Pancakes</div>
<div class="dd" style="left:976px;top:525px"></div>
<div class="dd" style="left:976px;top:577px"></div>
<div class="a" style="left:44px;top:605px;width:85px;height:52px;background:#d46b43;"></div>
<div class="a" style="left:128px;top:605px;width:1px;height:52px;background:#d35f35;"></div>
<div class="a" style="left:44px;top:624.28px;width:84px;text-align:center;font-size:13.8px;line-height:15.87px;color:#fdf1dc;font-weight:bold;white-space:nowrap;">Week 4</div>
<div class="a" style="left:44px;top:657px;width:85px;height:52px;background:#f3d3c9;"></div>
<div class="a" style="left:47.5px;top:675.19px;font-size:13.9px;line-height:15.98px;color:#353b45;font-weight:bold;white-space:nowrap;transform:scaleX(0.88);transform-origin:0 0">Sides</div>
<div class="a" style="left:129px;top:605px;width:861px;height:1px;background:#d35f35;"></div>
<div class="a" style="left:129px;top:657px;width:861px;height:1px;background:#f3c8ba;"></div>
<div class="a" style="left:989px;top:606px;width:1px;height:52px;background:#d35f35;"></div>
<div class="a" style="left:989px;top:658px;width:1px;height:52px;background:#f3c8ba;"></div>
<div class="a" style="left:132px;top:623.19px;font-size:13.9px;line-height:15.98px;color:#000;font-weight:normal;white-space:nowrap;">Cereal</div>
<div class="dd" style="left:238px;top:629px"></div>
<div class="dd" style="left:238px;top:681px"></div>
<div class="a" style="left:255px;top:623.19px;font-size:13.9px;line-height:15.98px;color:#000;font-weight:normal;white-space:nowrap;">Frittata</div>
<div class="dd" style="left:361px;top:629px"></div>
<div class="dd" style="left:361px;top:681px"></div>
<div class="a" style="left:378px;top:623.19px;font-size:13.9px;line-height:15.98px;color:#000;font-weight:normal;white-space:nowrap;">MYO</div>
<div class="dd" style="left:484px;top:629px"></div>
<div class="dd" style="left:484px;top:681px"></div>
<div class="a" style="left:501px;top:623.19px;font-size:13.9px;line-height:15.98px;color:#000;font-weight:normal;white-space:nowrap;">Pancakes</div>
<div class="dd" style="left:607px;top:629px"></div>
<div class="dd" style="left:607px;top:681px"></div>
<div class="a" style="left:624px;top:623.19px;font-size:13.9px;line-height:15.98px;color:#000;font-weight:normal;white-space:nowrap;">Cereal</div>
<div class="dd" style="left:730px;top:629px"></div>
<div class="dd" style="left:730px;top:681px"></div>
<div class="a" style="left:747px;top:623.19px;font-size:13.9px;line-height:15.98px;color:#000;font-weight:normal;white-space:nowrap;">Frittata</div>
<div class="dd" style="left:853px;top:629px"></div>
<div class="dd" style="left:853px;top:681px"></div>
<div class="a" style="left:870px;top:623.19px;font-size:13.9px;line-height:15.98px;color:#000;font-weight:normal;white-space:nowrap;">MYO</div>
<div class="dd" style="left:976px;top:629px"></div>
<div class="dd" style="left:976px;top:681px"></div>
<div class="a" style="left:129px;top:709px;width:861px;height:1px;background:#f3c8ba;"></div>
<div class="a" style="left:44px;top:709px;width:85px;height:1px;background:#f3c8ba;"></div>
<svg style="left:0;top:0" width="1289" height="1124"><rect x="1108.5" y="1050.5" width="94" height="19" stroke="#1a73e8" stroke-width="1.3" fill="none"/></svg>
<div class="a" style="left:1199px;top:1066px;width:9px;height:9px;border-radius:50%;background:#0b57d0;border:1px solid #fff"></div>
<div class="a" style="left:1204px;top:215px;width:20px;height:22px;background:#fff;"></div>
<div class="a" style="left:1224px;top:215px;width:1px;height:862px;background:#dadce0;"></div>
<div class="a" style="left:1225px;top:215px;width:10px;height:862px;background:#fff;"></div>
<div class="a" style="left:1225px;top:215px;width:10px;height:22px;background:#f8f8f8;"></div>
<div class="a" style="left:1225px;top:239px;width:9px;height:31px;background:#dadce0;border-radius:5px"></div>
<div class="a" style="left:1224px;top:237px;width:12px;height:1px;background:#c4c7c5;"></div>
<div class="a" style="left:1225px;top:1047px;width:11px;height:1px;background:#e8e8e8;"></div>
<div class="a" style="left:1225px;top:1061px;width:11px;height:1px;background:#e8e8e8;"></div>
<div class="a" style="left:1225px;top:1076px;width:11px;height:1px;background:#e8e8e8;"></div>
<div class="a" style="left:1225px;top:1048px;width:11px;height:13px;background:#f8f8f8;"></div>
<div class="a" style="left:1225px;top:1062px;width:11px;height:14px;background:#f8f8f8;"></div>
<div class="dd" style="left:1226.5px;top:1053px;border-top:none;border-bottom:4px solid #8a8a8a;border-left-width:3.5px;border-right-width:3.5px"></div>
<div class="dd" style="left:1226.5px;top:1067px;border-top-color:#8a8a8a"></div>
<div class="a" style="left:1px;top:1077px;width:1235px;height:12px;background:#f8f8f8;"></div>
<div class="a" style="left:1px;top:1076px;width:1235px;height:1px;background:#e8e8e8;"></div>
<div class="a" style="left:43px;top:1077px;width:1px;height:12px;background:#e0e0e0;"></div>
<div class="a" style="left:46px;top:1078px;width:523px;height:9px;background:#dadce0;border-radius:5px"></div>
<div class="a" style="left:1196px;top:1077px;width:1px;height:12px;background:#e8e8e8;"></div>
<div class="a" style="left:1210px;top:1077px;width:1px;height:12px;background:#e8e8e8;"></div>
<div class="a" style="left:1224px;top:1077px;width:1px;height:12px;background:#e0e0e0;"></div>
<div class="a" style="left:1201px;top:1079px;width:0;height:0;border-top:3.5px solid transparent;border-bottom:3.5px solid transparent;border-right:4px solid #8a8a8a"></div>
<div class="a" style="left:1216px;top:1079px;width:0;height:0;border-top:3.5px solid transparent;border-bottom:3.5px solid transparent;border-left:4px solid #8a8a8a"></div>
<div class="a" style="left:1px;top:1089px;width:1235px;height:1px;background:#dadce0;"></div>
<div class="a" style="left:435px;top:1090px;width:106px;height:34px;background:#e1e9f7;"></div>
<svg style="left:54px;top:1102px" width="10" height="10"><path d="M5 0V10M0 5H10" stroke="#444746" stroke-width="1.4"/></svg>
<svg style="left:89px;top:1102px" width="14" height="10"><path d="M0 1.4H14M0 5H14M0 8.6H14" stroke="#444746" stroke-width="1.3"/></svg>
<div class="st" style="left:139px">How to Use</div>
<div class="dd" style="left:222px;top:1105px;border-top-color:#444746;border-left-width:4px;border-right-width:4px"></div>
<div class="st" style="left:254px">Calendar</div>
<div class="dd" style="left:322px;top:1105px;border-top-color:#444746;border-left-width:4px;border-right-width:4px"></div>
<div class="st" style="left:354px">Recipes</div>
<div class="dd" style="left:415px;top:1105px;border-top-color:#444746;border-left-width:4px;border-right-width:4px"></div>
<div class="st" style="left:447px;color:#0b57d0;font-weight:bold">Breakfast</div>
<div class="dd" style="left:521px;top:1105px;border-top-color:#0b57d0;border-left-width:4px;border-right-width:4px"></div>
<div class="st" style="left:553px">Lunch</div>
<div class="dd" style="left:602px;top:1105px;border-top-color:#444746;border-left-width:4px;border-right-width:4px"></div>
<div class="st" style="left:634px">Snacks</div>
<div class="dd" style="left:690px;top:1105px;border-top-color:#444746;border-left-width:4px;border-right-width:4px"></div>
<div class="st" style="left:722px">Dinner</div>
<div class="dd" style="left:775px;top:1105px;border-top-color:#444746;border-left-width:4px;border-right-width:4px"></div>
<div class="st" style="left:807px">License &amp; Terms</div>
<div class="dd" style="left:923px;top:1105px;border-top-color:#444746;border-left-width:4px;border-right-width:4px"></div>
<svg style="left:1259.5px;top:1092px" width="7" height="11"><path d="M1 0.8L5.6 5.3L1 9.8" stroke="#444746" stroke-width="1.4" fill="none"/></svg>
<svg style="left:1253px;top:181px" width="18" height="18"><path d="M0 2A2 2 0 0 1 2 0H14V4H4V14H0Z" fill="#4285f4"/><path d="M14 0H16A2 2 0 0 1 18 2V14H14Z" fill="#fbbc04"/><path d="M0 14H14V18H2A2 2 0 0 1 0 16Z" fill="#34a853"/><path d="M14 14H18L14 18Z" fill="#ea4335"/><path d="M4 4H14V14H4Z" fill="#fff"/><text x="9" y="12.3" font-size="7.5" font-family="Liberation Sans" font-weight="bold" fill="#4285f4" text-anchor="middle">31</text></svg>
<svg style="left:1253px;top:234px" width="18" height="18"><rect width="18" height="18" rx="2" fill="#fbbc04"/><circle cx="9" cy="8" r="3.8" fill="#fff"/><rect x="7.3" y="12.5" width="3.4" height="1.6" fill="#fff"/></svg>
<svg style="left:1254px;top:286px" width="17" height="17"><circle cx="8" cy="9" r="6.3" stroke="#1a73e8" stroke-width="2.6" fill="none"/><path d="M5 9L7.5 11.5L15 3" stroke="#1a73e8" stroke-width="2.4" fill="none"/><path d="M13 1L17 2L15.5 5Z" fill="#1a73e8"/></svg>
<svg style="left:1256px;top:340px" width="14" height="16"><circle cx="6.5" cy="3.6" r="3" fill="#0b57d0"/><path d="M0 15.7V11.5A3.5 3.5 0 0 1 3.5 8H9.8A3.5 3.5 0 0 1 13.3 11.5V15.7Z" fill="#0b57d0"/><path d="M0 15.7V11.5A3.5 3.5 0 0 1 2.5 8.2V15.7Z" fill="#8ab4f8"/><path d="M13.3 15.7V11.5A3.5 3.5 0 0 0 10.8 8.2V15.7Z" fill="#8ab4f8"/></svg>
<svg style="left:1256px;top:391.5px" width="13" height="17" viewBox="0 0 15 20"><path d="M7.5 0A7.5 7.5 0 0 1 15 7.5C15 12 7.5 20 7.5 20C7.5 20 0 12 0 7.5A7.5 7.5 0 0 1 7.5 0Z" fill="#34a853"/><path d="M2.2 2.2A7.5 7.5 0 0 1 15 7.5L7.5 7.5Z" fill="#4285f4"/><path d="M0 7.5A7.5 7.5 0 0 1 2.2 2.2L7.5 7.5Z" fill="#ea4335"/><path d="M0 7.5L7.5 7.5L3.3 13Z" fill="#fbbc04"/><circle cx="7.5" cy="7.5" r="2.8" fill="#fff"/></svg>
<div class="a" style="left:1253px;top:442px;width:18px;height:1px;background:#dadce0;"></div>
<svg style="left:1256px;top:530px" width="13" height="13"><path d="M6.5 0V13M0 6.5H13" stroke="#1f1f1f" stroke-width="1.6"/></svg>
<div class="a" style="left:0;top:0;width:1289px;height:1124px;border:1px solid #7a7a7a;border-top-color:#5c4e6c;border-radius:8px;box-shadow:0 0 0 12px #888;pointer-events:none"></div>
</body></html>
